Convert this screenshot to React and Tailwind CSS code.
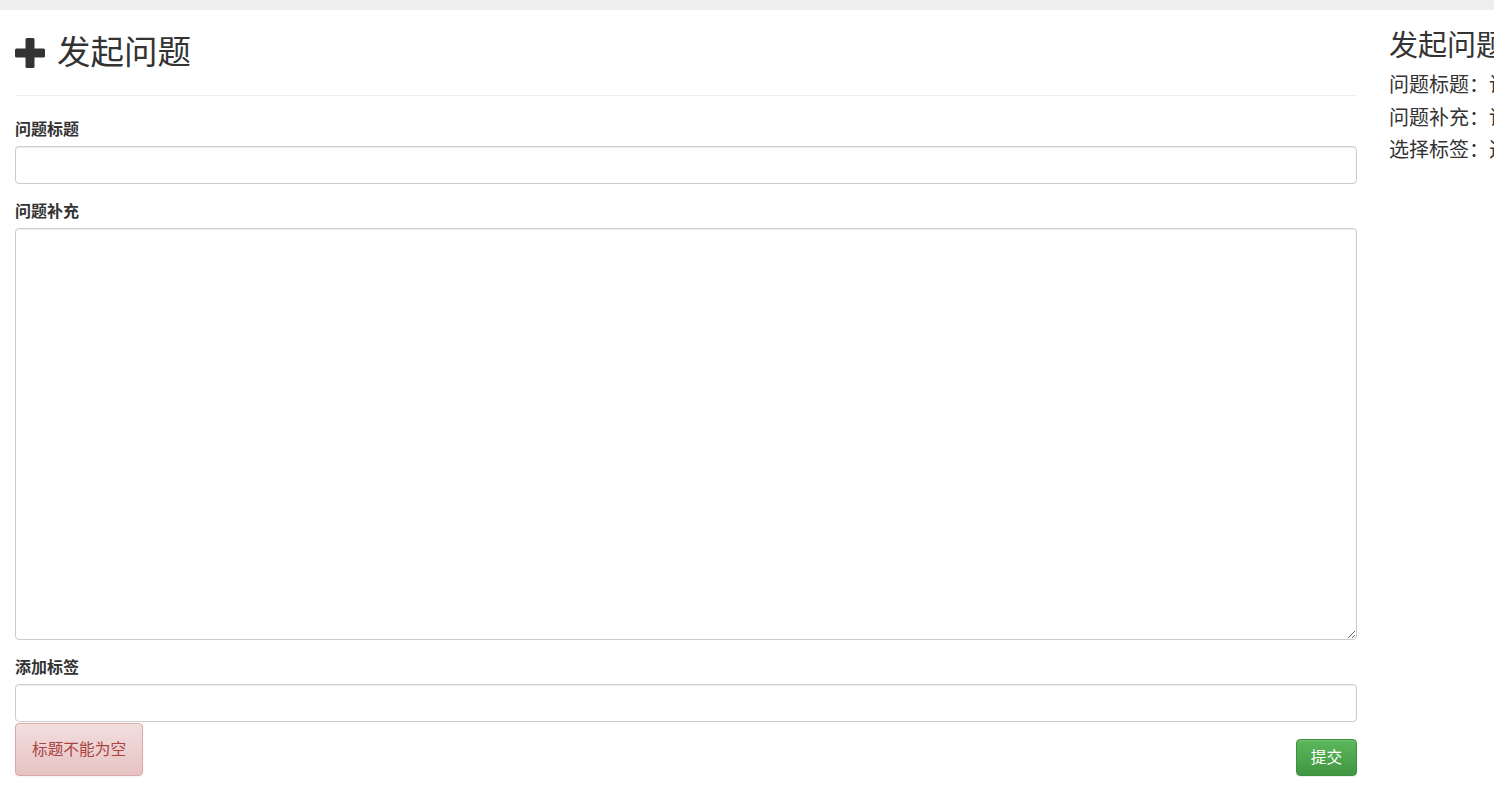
import React from 'react';

const cjk = { fontFamily: '"Helvetica Neue", "Liberation Sans", "Noto Sans CJK SC", sans-serif' };

function PlusIcon() {
    return (
        <svg width="30" height="30" viewBox="0 0 30 30" className="shrink-0">
            <rect x="10.5" y="0" width="9" height="30" rx="1.5" fill="#333" />
            <rect x="0" y="10.5" width="30" height="9" rx="1.5" fill="#333" />
        </svg>
    );
}

export default function App() {
    const tips = [
        '问题标题：请用精简的语言描述您发布的问题，不超过25字',
        '问题补充：详细补充您的问题内容，并确保问题描述清晰直观，并提供一些相关的资料',
        '选择标签：选择一个或者多个合适的标签，用逗号隔开，每个标签不超过10个字',
    ];

    return (
        <div className="w-[1494px] h-[787px] overflow-hidden bg-white text-[#333]" style={cjk}>
            <div className="h-[10px] bg-[#eeeeee]" />

            <div className="flex">
                {/* main form */}
                <div className="w-[1372px] shrink-0 px-[15px]">
                    <h2 className="flex items-center gap-[12px] mt-[23px] h-[40px] text-[33.5px] leading-[40px] font-normal">
                        <PlusIcon />
                        <span>发起问题</span>
                    </h2>
                    <hr className="mt-[22px] border-0 border-t border-[#eeeeee]" />

                    <form className="mt-[25px]">
                        <label className="block text-[16px] font-bold leading-[18px] mb-[7px]">问题标题</label>
                        <input
                            type="text"
                            className="block w-full h-[38px] px-[13px] border border-[#cccccc] rounded-[4px] shadow-[inset_0_1px_1px_rgba(0,0,0,0.075)] outline-none"
                        />

                        <label className="block mt-[19px] text-[16px] font-bold leading-[18px] mb-[7px]">问题补充</label>
                        <textarea
                            className="block w-full h-[412px] px-[13px] py-[7px] border border-[#cccccc] rounded-[4px] shadow-[inset_0_1px_1px_rgba(0,0,0,0.075)] outline-none"
                        />

                        <label className="block mt-[19px] text-[16px] font-bold leading-[18px] mb-[7px]">添加标签</label>
                        <input
                            type="text"
                            className="block w-full h-[38px] px-[13px] border border-[#cccccc] rounded-[4px] shadow-[inset_0_1px_1px_rgba(0,0,0,0.075)] outline-none"
                        />

                        <div className="flex items-end justify-between mt-[1px]">
                            <div className="h-[53px] px-[16px] flex items-center text-[15.7px] text-[#a94442] border border-[#dca7a7] rounded-[4px] bg-gradient-to-b from-[#f2dede] to-[#e7c3c3] shadow-[inset_0_1px_0_rgba(255,255,255,0.25),0_1px_2px_rgba(0,0,0,0.05)]">
                                标题不能为空
                            </div>
                            <button
                                type="button"
                                className="h-[37px] w-[61px] text-[15.7px] text-white border border-[#3e8f3e] rounded-[4px] bg-gradient-to-b from-[#5cb85c] to-[#419641] shadow-[inset_0_1px_0_rgba(255,255,255,0.15),0_1px_1px_rgba(0,0,0,0.075)]"
                            >
                                提交
                            </button>
                        </div>
                    </form>
                </div>

                {/* guide */}
                <div className="flex-1 min-w-0 pl-[17px]">
                    <h3 className="mt-[19px] text-[29px] leading-[34px] font-normal whitespace-nowrap">发起问题指南</h3>
                    <div className="mt-[6px] text-[20px] leading-[32.5px] whitespace-nowrap">
                        {tips.map((t) => (
                            <div key={t}>{t}</div>
                        ))}
                    </div>
                </div>
            </div>
        </div>
    );
}
